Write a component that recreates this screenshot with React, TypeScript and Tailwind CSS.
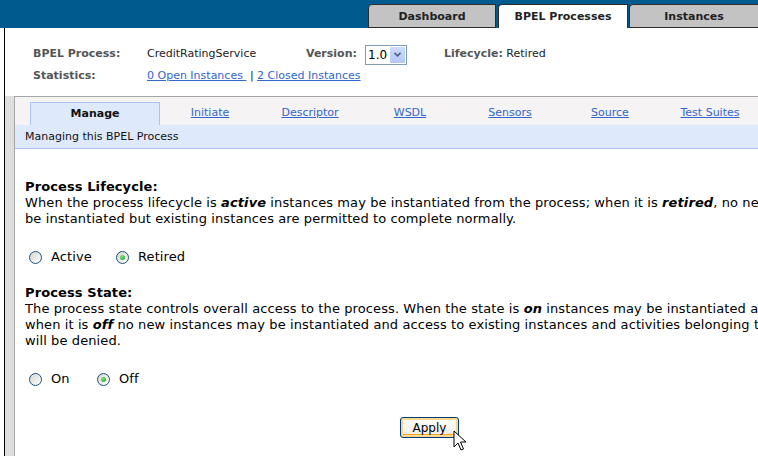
import React from "react";

function Radio({ checked }: { checked?: boolean }) {
  return (
    <span className="relative inline-flex h-[13px] w-[13px] shrink-0 items-center justify-center rounded-full border border-[#1c5180] bg-[linear-gradient(135deg,#d6d6ce,#ffffff)]">
      {checked && (
        <span className="h-[5px] w-[5px] rounded-full bg-[radial-gradient(circle_at_35%_35%,#7ee07e,#21a121)]" />
      )}
    </span>
  );
}

function Option({ label, checked, w }: { label: string; checked?: boolean; w: string }) {
  return (
    <span className={`inline-flex shrink-0 items-center ${w}`}>
      <Radio checked={checked} />
      <span className="ml-[9px]">{label}</span>
    </span>
  );
}

export default function App() {
  const subtabs = ["Initiate", "Descriptor", "WSDL", "Sensors", "Source", "Test Suites"];
  return (
    <div className="relative h-[456px] w-[758px] overflow-hidden bg-white font-['DejaVu_Sans',Verdana,sans-serif] text-black">
      {/* top bar */}
      <div className="flex h-[28px] items-end bg-[#005a8e] pl-[368px]">
        <div className="flex h-[24px] w-[128px] shrink-0 items-center justify-center rounded-tl-[4px] border border-[#2b2b2b] bg-[#c3c3c3] pt-[2px] text-[11px] font-bold text-[#222]">
          Dashboard
        </div>
        <div className="ml-[2px] flex h-[24px] w-[130px] shrink-0 items-center justify-center rounded-tl-[4px] border border-b-0 border-[#2b2b2b] bg-white pt-[2px] text-[11px] font-bold text-[#222]">
          BPEL Processes
        </div>
        <div className="ml-[1px] flex h-[24px] w-[130px] shrink-0 items-center justify-center rounded-tl-[4px] border border-[#2b2b2b] bg-[#c3c3c3] pt-[2px] text-[11px] font-bold text-[#222]">
          Instances
        </div>
      </div>

      {/* body */}
      <div className="ml-[4px] flex h-[428px] flex-col border-l border-black">
        {/* info */}
        <div className="pl-[28px] pt-[15px] text-[11px]">
          <div className="flex h-[22px] items-center pt-[1px]">
            <span className="w-[114px] shrink-0 font-bold text-[#555]">BPEL Process:</span>
            <span className="w-[159px] shrink-0 text-[#222]">CreditRatingService</span>
            <span className="w-[59px] shrink-0 font-bold text-[#555]">Version:</span>
            <span className="flex h-[20px] w-[42px] shrink-0 border border-[#7f9db9] bg-white">
              <span className="flex-1 pl-[2px] text-[12px] leading-[18px] text-black">1.0</span>
              <span className="m-[1px] flex w-[15px] items-center justify-center rounded-[1px] bg-[linear-gradient(#cddcfd,#b3c7f5)]">
                <svg width="7" height="5" viewBox="0 0 7 5">
                  <path d="M0.5 0.8 L3.5 3.8 L6.5 0.8" fill="none" stroke="#4d6185" strokeWidth="1.6" />
                </svg>
              </span>
            </span>
            <span className="ml-[37px] text-[#222]">
              <span className="font-bold text-[#555]">Lifecycle:</span> Retired
            </span>
          </div>
          <div className="flex h-[22px] items-center">
            <span className="w-[114px] shrink-0 font-bold text-[#555]">Statistics:</span>
            <span className="text-[#222]">
              <a className="text-[#3366cc] underline">0 Open Instances&nbsp;</a>
              <span> | </span>
              <a className="text-[#3366cc] underline">2 Closed Instances</a>
            </span>
          </div>
        </div>

        {/* panel */}
        <div className="mt-[9px] flex min-w-0 flex-1">
          <div className="w-[9px] shrink-0 bg-[#dedede]" />
          <div className="min-w-0 flex-1 overflow-hidden border-l border-t border-[#a6a6a6]">
            <div className="flex h-[28px] items-end bg-[#f5f3f3] pl-[15px] text-[11px]">
              <div className="flex h-[23px] w-[130px] shrink-0 items-center justify-center border border-b-0 border-[#a9c3f2] bg-[#dfe9fc] pt-[1px] font-bold text-[#111]">
                Manage
              </div>
              {subtabs.map((t) => (
                <div key={t} className="flex h-[28px] w-[100px] shrink-0 items-center justify-center pt-[4px]">
                  <a className="text-[#3366cc] underline">{t}</a>
                </div>
              ))}
            </div>
            <div className="flex h-[24px] items-center border-b border-[#a9c3f2] bg-[#dfe9fc] pl-[10px] pt-[2px] text-[11px] text-[#111]">
              Managing this BPEL Process
            </div>

            <div className="whitespace-nowrap pl-[10px] pt-[30px] text-[13px] leading-[16px] tracking-[0.1px]">
              <div className="font-bold">Process Lifecycle:</div>
              <div>
                When the process lifecycle is <b><i>active</i></b> instances may be instantiated from the process; when it is <b><i>retired</i></b>, no new instances may
                <br />
                be instantiated but existing instances are permitted to complete normally.
              </div>
              <div className="mt-[22px] flex h-[16px] items-center pl-[4px]">
                <Option label="Active" w="w-[87px]" />
                <Option label="Retired" checked w="w-[87px]" />
              </div>

              <div className="mt-[20px] font-bold">Process State:</div>
              <div>
                The process state controls overall access to the process. When the state is <b><i>on</i></b> instances may be instantiated and
                <br />
                when it is <b><i>off</i></b> no new instances may be instantiated and access to existing instances and activities belonging to it
                <br />
                will be denied.
              </div>
              <div className="mt-[22px] flex h-[16px] items-center pl-[4px]">
                <Option label="On" w="w-[68px]" />
                <Option label="Off" checked w="w-[68px]" />
              </div>

              <div className="relative mt-[30px] ml-[375px] w-[59px]">
                <button className="flex h-[21px] w-[59px] items-center justify-center rounded-[3px] border border-[#003c74] bg-[linear-gradient(#ffffff,#f3f1ec_70%,#e3e0d6)] text-[12px] tracking-normal text-black shadow-[inset_0_0_0_2px_#fbd88e,inset_0_-2px_0_1px_#f5a623]">
                  Apply
                </button>
                <svg className="absolute left-[53px] top-[13px]" width="14" height="22" viewBox="0 0 14 22">
                  <path d="M1 1 L1 17 L5 13 L8 20 L10.5 19 L7.5 12 L13 12 Z" fill="#fff" stroke="#000" strokeWidth="1" strokeLinejoin="miter" />
                </svg>
              </div>
            </div>
          </div>
        </div>
      </div>
    </div>
  );
}
